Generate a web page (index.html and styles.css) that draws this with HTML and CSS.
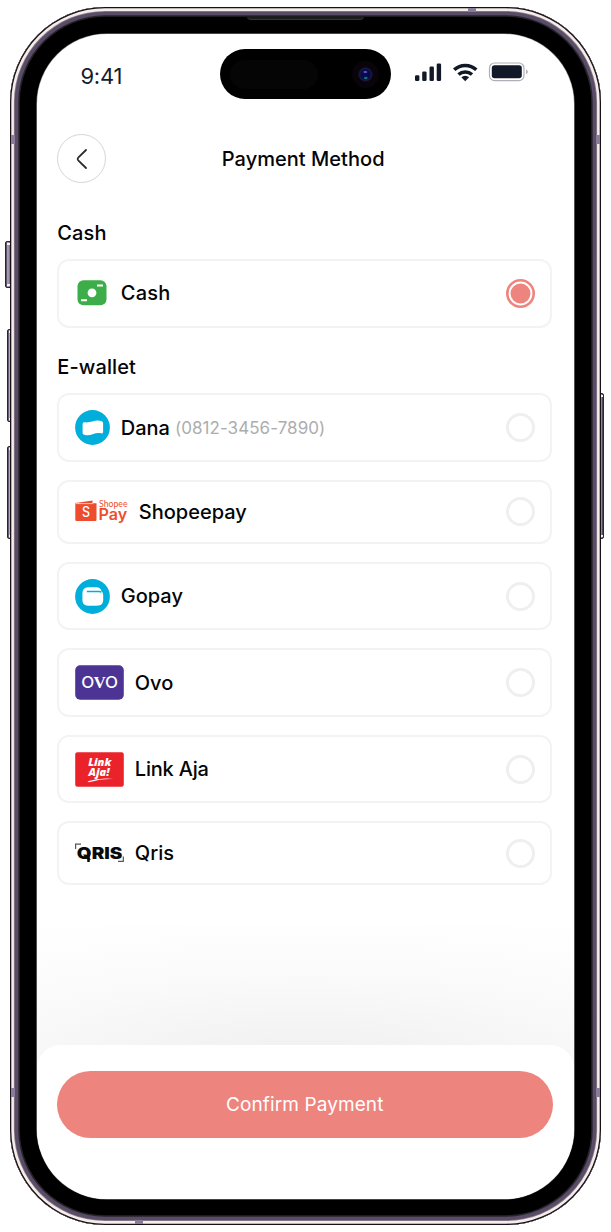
FILE: index.html
```html
<!DOCTYPE html>
<html lang="en">
<head>
<meta charset="utf-8">
<title>Payment Method</title>
<link rel="stylesheet" href="styles.css">
</head>
<body>
<div class="phone">
  <i class="key key-mute"></i><i class="key key-up"></i><i class="key key-down"></i><i class="key key-power"></i>
  <i class="band band-v band-lt"></i><i class="band band-v band-rt"></i><i class="band band-v band-lb"></i><i class="band band-v band-rb"></i>
  <i class="band band-h band-t"></i><i class="band band-h band-b"></i>
  <i class="earpiece"></i>
  <main class="screen">
    <header class="status">
      <span class="time">9:41</span>
      <div class="island"><i class="sensor"></i>
        <svg class="lens" width="27" height="27" viewBox="0 0 27 27"><circle cx="13.5" cy="13.5" r="13.5" fill="#08040a"/><circle cx="13.5" cy="13.5" r="7.2" fill="#14163a"/><circle cx="13.5" cy="13.5" r="5" fill="#090a4c"/><ellipse cx="13.3" cy="11" rx="2" ry="1" fill="#5a5ad0"/><ellipse cx="13.8" cy="17" rx="1.8" ry="1.3" fill="#16707c"/></svg>
      </div>
      <svg class="signals" width="114" height="20" viewBox="0 0 114 20">
        <g fill="#111827"><rect x="0" y="12.3" width="4.4" height="5.7" rx="1.3"/><rect x="7.2" y="8.5" width="4.4" height="9.5" rx="1.3"/><rect x="14.5" y="3.5" width="4.4" height="14.5" rx="1.3"/><rect x="21.7" y="0.5" width="4.4" height="17.5" rx="1.3"/></g>
        <g fill="none" stroke="#111827" stroke-width="3.5"><path d="M39.2 6.800a16.2 16.2 0 0 1 22.1 0"/><path d="M43.5 11.500a10 10 0 0 1 13.5 0"/></g>
        <path d="M50.2 18.2l-3.9-3.9a5.8 5.8 0 0 1 7.8 0z" fill="#111827"/>
        <rect x="74.5" y="0" width="34.5" height="17.6" rx="5" fill="#fff" stroke="#aeb0b6" stroke-width="1.2"/>
        <rect x="76.8" y="2.3" width="30" height="13" rx="2.8" fill="#111827"/>
        <path d="M111 6.6c2.4.8 2.4 3.800 0 4.600z" fill="#aeb0b6"/>
      </svg>
    </header>
    <nav class="topbar">
      <button class="back" aria-label="Back"><svg width="14" height="22" viewBox="0 0 14 22" fill="none" stroke="#292d32" stroke-width="1.8" stroke-linecap="round" stroke-linejoin="round"><path d="M12 2L4.200 9.700Q3 11 4.200 12.300L12 20"/></svg></button>
      <h1 class="title">Payment Method</h1>
    </nav>
    <section class="methods">
      <h2 class="heading">Cash</h2>
      <div class="card">
        <svg class="logo logo-cash" width="30" height="26" viewBox="0 0 30 26"><rect x=".5" y=".3" width="29" height="25" rx="6" fill="#3cad49"/><circle cx="15" cy="12.800" r="4.400" fill="#fff"/><path d="M20 5.500h6M4 20.200h6" stroke="#fff" stroke-width="2"/></svg>
        <span class="name name-cash">Cash</span>
        <svg class="radio" width="29" height="29" viewBox="0 0 29 29"><circle cx="14.500" cy="14.500" r="13.200" fill="#fff" stroke="#ee847e" stroke-width="2.600"/><circle cx="14.500" cy="14.500" r="10" fill="#ee847e"/></svg>
      </div>
      <h2 class="heading heading-wallet">E-wallet</h2>
      <div class="list">
        <div class="card">
          <svg class="logo" width="35" height="35" viewBox="0 0 35 35"><circle cx="17.500" cy="17.500" r="17.400" fill="#00aedb"/><path d="M7.600 14q0-1.900 2-1.700c5 .7 9-1.800 13.200-1.800q2.400 0 4 .8 1.300.6 1.300 2v8.500q0 2-2 1.500c-5.500-1.400-9.500 2.200-14.300 2q-4.200-.2-4.200-2.300z" fill="#fff"/></svg>
          <span class="name">Dana</span><span class="number">(0812-3456-7890)</span><i class="radio ring"></i>
        </div>
        <div class="card short">
          <svg class="logo" width="53" height="24" viewBox="0 0 53 24"><path d="M.3 3L17.500.6V3.300H21.500V19.700q0 1.300-1.300 1.300H1.600Q.3 21 .3 19.700z" fill="#ee4d2d"/><path d="M.8 3.600h17.200" stroke="#fff" stroke-width=".7"/><text x="7" y="17" class="lg-s" textLength="8" lengthAdjust="spacingAndGlyphs">S</text><text x="24" y="7" class="lg-shopee" textLength="28.500" lengthAdjust="spacingAndGlyphs">Shopee</text><text x="23.600" y="19.500" class="lg-pay" textLength="28.700" lengthAdjust="spacingAndGlyphs">Pay</text></svg>
          <span class="name">Shopeepay</span><i class="radio ring"></i>
        </div>
        <div class="card">
          <svg class="logo" width="35" height="35" viewBox="0 0 35 35"><circle cx="17.500" cy="17.500" r="17.400" fill="#00aedb"/><path d="M13 8.300h8.500q4 0 5 4 1.700 1.200 1.700 3.700v5q0 5-4.500 5.400-6.500.7-12.500 0-3.700-.5-3.800-5.400v-6.500q0-5.700 5.600-6.200z" fill="#fff"/><path d="M11.800 12.500h12q1.700 0 2.700.8" stroke="#00aedb" stroke-width="1.300" fill="none"/></svg>
          <span class="name">Gopay</span><i class="radio ring"></i>
        </div>
        <div class="card">
          <svg class="logo" width="49" height="35" viewBox="0 0 49 35"><rect x=".2" y=".2" width="48.600" height="34.600" rx="5" fill="#4c3494"/><text x="6.300" y="23" class="lg-ovo" textLength="13" lengthAdjust="spacingAndGlyphs">O</text><text x="18.600" y="23" class="lg-v" textLength="12.300" lengthAdjust="spacingAndGlyphs">V</text><text x="30" y="23" class="lg-ovo" textLength="13" lengthAdjust="spacingAndGlyphs">O</text></svg>
          <span class="name">Ovo</span><i class="radio ring"></i>
        </div>
        <div class="card">
          <svg class="logo" width="49" height="35" viewBox="0 0 49 35"><rect x=".2" y=".2" width="48.600" height="34.600" rx="2.200" fill="#ea232a"/><text x="13.200" y="14.300" class="lg-link" textLength="23" lengthAdjust="spacingAndGlyphs">Link</text><text x="13.500" y="23.500" class="lg-link" textLength="21" lengthAdjust="spacingAndGlyphs">Aja!</text><path d="M12.500 29.200q12-3.600 26-2.300-13-.3-24.500 3.400z" fill="#fff"/></svg>
          <span class="name name-link">Link Aja</span><i class="radio ring"></i>
        </div>
        <div class="card short">
          <svg class="logo" width="49" height="20" viewBox="0 0 49 20"><path d="M.6 6V1.200H6M48.300 13.500v4.800H43" stroke="#555" stroke-width="1.200" fill="none"/><text x="1.800" y="15.500" class="lg-qris" textLength="45.500" lengthAdjust="spacingAndGlyphs">QRIS</text><path d="M13.500 12v7" stroke="#0a0a0a" stroke-width="2.500"/></svg>
          <span class="name">Qris</span><i class="radio ring"></i>
        </div>
      </div>
    </section>
    <div class="fade"></div>
    <footer class="sheet"><button class="confirm">Confirm Payment</button></footer>
  </main>
</div>
</body>
</html>
```
FILE: styles.css
```css
* { box-sizing: border-box; }
body { margin: 0; background: #fff; font-family: Inter, "Open Sans", sans-serif; color: #050505; }
.phone { position: relative; width: 590.500px; height: 1218px; margin: 7px 0 0 10.300px; padding: 26.500px 26.500px 26px 26.400px; border-radius: 95px; background: #000;
  box-shadow: inset 0 0 0 1.300px #1a1018, inset 0 0 0 3.900px #f4ede9, inset 0 0 0 4.700px #8d8090, inset 0 0 0 8.300px #594c66, inset 0 0 0 9.800px #26242a; }
.screen { display: flex; flex-direction: column; height: 100%; border-radius: 70px; background: #fff; overflow: hidden; box-shadow: 0 0 0 .6px #888; }
.key { position: absolute; z-index: -1; background: linear-gradient(90deg, #3c3248, #b5adc0 35%, #7b7188 75%, #261d2b); border: 1px solid #2c2433; border-radius: 2px; }
.key::before, .key::after { content: ""; position: absolute; left: 1px; width: 3px; height: 2px; background: #f5f1f4; }
.key::before { top: 1px; } .key::after { bottom: 1px; }
.key-mute { left: -5px; top: 234px; width: 7px; height: 47px; }
.key-up { left: -3.500px; top: 322px; width: 6px; height: 93px; }
.key-down { left: -3.500px; top: 439px; width: 6px; height: 93px; }
.key-power { right: -3px; top: 386px; width: 6px; height: 146px; }
.band { position: absolute; background: #897c98; }
.band-v { width: 4px; height: 9px; }
.band-h { width: 8px; height: 4px; }
.band-lt { left: 1px; top: 128px; } .band-rt { right: 1px; top: 128px; }
.band-lb { left: 1px; top: 1081px; } .band-rb { right: 1px; top: 1081px; }
.band-t { left: 457.500px; top: 1px; } .band-b { left: 124.500px; bottom: 1px; }
.earpiece { position: absolute; left: 236.500px; top: 9px; width: 117px; height: 4px; border-radius: 0 0 4px 4px; background: #1b1c1d; border-bottom: 1px solid #343536; }
.status { display: flex; height: 82px; flex: none; align-items: flex-start; padding: 15.500px 0 0 43.700px; }
.time { width: 139.500px; padding-top: 13px; font-size: 22px; line-height: 28px; color: #161c2d; letter-spacing: -.2px; }
.island { display: flex; justify-content: space-between; align-items: center; width: 171px; height: 50px; padding: 0 12px 0 10px; border-radius: 25px; background: #000; }
.sensor { width: 88px; height: 29px; border-radius: 15px; background: #050505; }
.signals { margin: 13.500px 0 0 24.200px; overflow: visible; }
.topbar { display: flex; flex: none; height: 68px; padding: 18.500px 21px 0 20.600px; }
.back { display: flex; align-items: center; justify-content: center; width: 49px; height: 49px; border: 1px solid #d6d6d6; border-radius: 50%; background: #fff; padding: 0 2px 0 0; }
.title { flex: 1; margin: 0; padding-right: 53.200px; text-align: center; font-size: 20px; line-height: 50px; font-weight: 500; letter-spacing: .03px; }
.methods { flex: none; height: 742px; padding: 34px 22.300px 0 20.600px; }
.heading { margin: 0; height: 41.700px; font-size: 20px; font-weight: 500; line-height: 30px; letter-spacing: .1px; }
.heading-wallet { margin-top: 24.800px; height: 40.800px; }
.list { display: flex; flex-direction: column; gap: 18px; }
.card { display: flex; align-items: center; height: 68.500px; padding: 0 15.500px; border: 2px solid #f3f3f3; border-radius: 12px; background: #fff; }
.short { height: 64px; }
.logo { flex: none; margin-right: 11px; overflow: visible; }
.logo-cash { margin-left: 2.200px; margin-right: 13.800px; }
.name { font-size: 20px; font-weight: 500; line-height: 28px; white-space: nowrap; }
.name-cash { letter-spacing: .25px; }
.name-link { letter-spacing: -.2px; }
.number { margin-left: 5px; padding-top: 1px; font-size: 17px; line-height: 28px; color: #adadad; letter-spacing: .05px; }
.radio { flex: none; width: 29px; height: 29px; margin-left: auto; }
.ring { border: 3px solid #efefef; border-radius: 50%; }
.fade { flex: 1; margin-bottom: -24px; background: radial-gradient(ellipse 620px 165px at 50% 100%, #f0f0f0 0%, #f3f3f3 22%, #f9f9f9 50%, #fdfdfd 78%, #fff 100%); }
.sheet { flex: none; height: 154px; padding: 25.500px 21px 0 20.600px; border-radius: 24px 24px 0 0; background: #fff; }
.confirm { display: block; width: 100%; height: 67.500px; border: 0; border-radius: 34px; background: #ee847e; color: #fff; font: 400 19px/67px Inter, sans-serif; letter-spacing: .1px; padding: 0 1px 0 0; }
.lg-s { font: 500 14px Inter, sans-serif; fill: #fff; }
.lg-shopee { font: 400 8.500px Lato, sans-serif; fill: #ee4d2d; }
.lg-pay { font: 600 15.500px Inter, sans-serif; fill: #ee4d2d; }
.lg-ovo { font: 500 15.500px Inter, sans-serif; fill: #fff; }
.lg-v { font: 700 16.500px "Liberation Serif", serif; fill: #fff; }
.lg-link { font: italic 800 11px "Open Sans", sans-serif; fill: #fff; }
.lg-qris { font: 900 16px Inter, sans-serif; fill: #0a0a0a; }
```
